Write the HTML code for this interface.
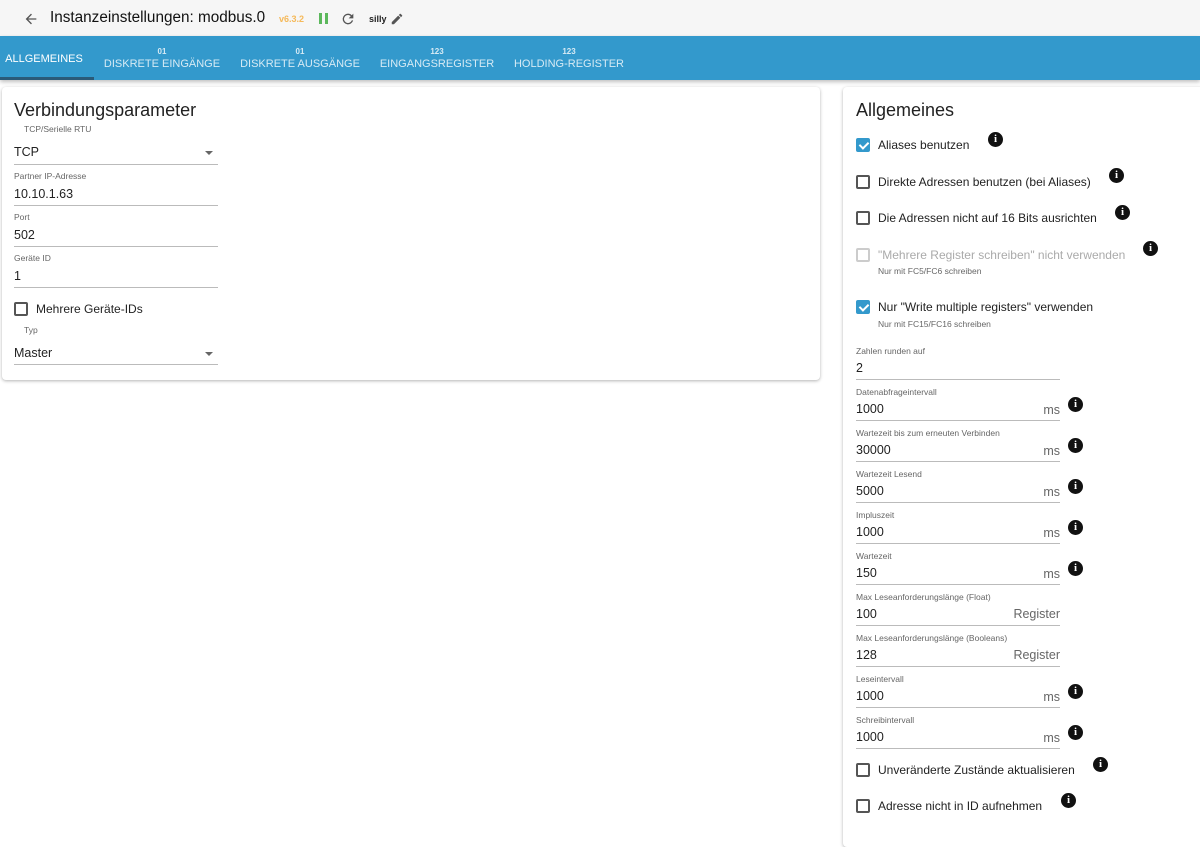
<!DOCTYPE html>
<html><head><meta charset="utf-8"><style>
*{box-sizing:border-box;margin:0;padding:0}
body{width:1200px;height:825px;overflow:hidden;background:#fff;font-family:"Liberation Sans",Arial,sans-serif;color:#222;position:relative}
.a{position:absolute;white-space:nowrap}
.hdr{position:absolute;left:0;top:0;width:1200px;height:36px;background:#f6f6f6}
.tabs{position:absolute;left:0;top:36px;width:1200px;height:44px;background:#3399cc;box-shadow:0 2px 4px rgba(0,0,0,.25)}
.tab{position:absolute;color:#fff;font-size:11px;text-align:center;opacity:.8}
.tab small{display:block;font-size:8px;font-weight:bold;margin-bottom:2px}
.card{position:absolute;background:#fff;border-radius:4px;box-shadow:0 1px 3px rgba(0,0,0,.3)}
.lbl{position:absolute;font-size:8.5px;color:#666;white-space:nowrap}
.val{position:absolute;font-size:12.5px;color:#222;white-space:nowrap}
.ln{position:absolute;height:1px;background:#bbb}
.unit{position:absolute;font-size:12.5px;color:#666;text-align:right}
.cb{position:absolute;width:14px;height:14px;border:2px solid #555;border-radius:2px}
.cb.on{background:#3399cc;border-color:#3399cc}
.cb.dis{border-color:#ccc}
.cb.on:after{content:"";position:absolute;left:3px;top:0px;width:4px;height:7px;border:solid #fff;border-width:0 2px 2px 0;transform:rotate(45deg)}
.cl{position:absolute;font-size:12px;color:#222;white-space:nowrap}
.i{position:absolute;width:15px;height:15px;border-radius:50%;background:#111;color:#fff;font-size:11px;font-weight:bold;text-align:center;line-height:15px;font-family:"Liberation Serif",serif}
.arr{position:absolute;width:0;height:0;border-left:4px solid transparent;border-right:4px solid transparent;border-top:4px solid #666}
</style></head><body>
<div class="hdr"></div>
<svg class="a" style="left:23px;top:11px" width="16" height="16" viewBox="0 0 24 24"><path d="M20 11H7.8l5.6-5.6L12 4l-8 8 8 8 1.4-1.4L7.8 13H20z" fill="#555"/></svg>
<div class="a" style="left:50px;top:9px;font-size:15.3px;color:#111">Instanzeinstellungen: modbus.0</div>
<div class="a" style="left:279px;top:14px;font-size:9px;font-weight:bold;color:#f5b95a">v6.3.2</div>
<div class="a" style="left:319px;top:13px;width:3px;height:11px;background:#5cb85c"></div>
<div class="a" style="left:325px;top:13px;width:3px;height:11px;background:#5cb85c"></div>
<svg class="a" style="left:340px;top:11px" width="16" height="16" viewBox="0 0 24 24"><path d="M17.65 6.35A7.96 7.96 0 0 0 12 4a8 8 0 1 0 7.73 10h-2.08A6 6 0 1 1 12 6c1.66 0 3.14.69 4.22 1.78L13 11h7V4z" fill="#555"/></svg>
<div class="a" style="left:369px;top:14px;font-size:9px;font-weight:bold;color:#222">silly</div>
<svg class="a" style="left:390px;top:12px" width="14" height="14" viewBox="0 0 24 24"><path d="M3 17.25V21h3.75L17.8 9.94l-3.75-3.75zM20.7 7.04a1 1 0 0 0 0-1.41l-2.34-2.34a1 1 0 0 0-1.41 0l-1.83 1.83 3.75 3.75z" fill="#555"/></svg>

<div class="tabs">
<div class="tab" style="left:0;width:88px;top:17px;opacity:1">ALLGEMEINES</div>
<div class="a" style="left:0;top:41px;width:94px;height:3px;background:#2a5a78"></div>
<div class="tab" style="left:100px;width:124px;top:11px"><small>01</small>DISKRETE EINGÄNGE</div>
<div class="tab" style="left:236px;width:128px;top:11px"><small>01</small>DISKRETE AUSGÄNGE</div>
<div class="tab" style="left:376px;width:122px;top:11px"><small>123</small>EINGANGSREGISTER</div>
<div class="tab" style="left:510px;width:118px;top:11px"><small>123</small>HOLDING-REGISTER</div>
</div>

<div class="card" style="left:2px;top:87px;width:818px;height:293px"></div>
<div class="a" style="left:14px;top:100px;font-size:18px;color:#222">Verbindungsparameter</div>
<div class="lbl" style="left:24px;top:124px">TCP/Serielle RTU</div>
<div class="val" style="left:14px;top:145px">TCP</div><div class="arr" style="left:205px;top:151px"></div>
<div class="ln" style="left:14px;top:164px;width:204px"></div>
<div class="lbl" style="left:14px;top:171px">Partner IP-Adresse</div>
<div class="val" style="left:14px;top:187px">10.10.1.63</div>
<div class="ln" style="left:14px;top:205px;width:204px"></div>
<div class="lbl" style="left:14px;top:212px">Port</div>
<div class="val" style="left:14px;top:228px">502</div>
<div class="ln" style="left:14px;top:246px;width:204px"></div>
<div class="lbl" style="left:14px;top:253px">Geräte ID</div>
<div class="val" style="left:14px;top:269px">1</div>
<div class="ln" style="left:14px;top:287px;width:204px"></div>
<div class="cb" style="left:14px;top:302px"></div>
<div class="cl" style="left:36px;top:302px">Mehrere Geräte-IDs</div>
<div class="lbl" style="left:24px;top:325px">Typ</div>
<div class="val" style="left:14px;top:346px">Master</div><div class="arr" style="left:205px;top:352px"></div>
<div class="ln" style="left:14px;top:364px;width:204px"></div>

<div class="card" style="left:843px;top:87px;width:380px;height:760px"></div>
<div class="a" style="left:856px;top:100px;font-size:18px;color:#222">Allgemeines</div>

<div class="cb on" style="left:856px;top:138px"></div><div class="cl" style="left:878px;top:138px">Aliases benutzen</div><div class="i" style="left:988px;top:132px">i</div>
<div class="cb" style="left:856px;top:175px"></div><div class="cl" style="left:878px;top:175px">Direkte Adressen benutzen (bei Aliases)</div><div class="i" style="left:1109px;top:168px">i</div>
<div class="cb" style="left:856px;top:211px"></div><div class="cl" style="left:878px;top:211px">Die Adressen nicht auf 16 Bits ausrichten</div><div class="i" style="left:1115px;top:205px">i</div>
<div class="cb dis" style="left:856px;top:248px"></div><div class="cl" style="left:878px;top:248px;color:#aaa">"Mehrere Register schreiben" nicht verwenden</div><div class="i" style="left:1143px;top:241px">i</div>
<div class="lbl" style="left:878px;top:266px;font-size:8.5px">Nur mit FC5/FC6 schreiben</div>
<div class="cb on" style="left:856px;top:300px"></div><div class="cl" style="left:878px;top:300px">Nur "Write multiple registers" verwenden</div>
<div class="lbl" style="left:878px;top:319px;font-size:8.5px">Nur mit FC15/FC16 schreiben</div>

<div class="lbl" style="left:856px;top:346px">Zahlen runden auf</div><div class="val" style="left:856px;top:361px">2</div><div class="ln" style="left:856px;top:379px;width:204px"></div>

<div class="lbl" style="left:856px;top:387px">Datenabfrageintervall</div><div class="val" style="left:856px;top:402px">1000</div><div class="unit" style="left:1000px;top:403px;width:60px">ms</div><div class="ln" style="left:856px;top:420px;width:204px"></div><div class="i" style="left:1068px;top:397px">i</div>
<div class="lbl" style="left:856px;top:428px">Wartezeit bis zum erneuten Verbinden</div><div class="val" style="left:856px;top:443px">30000</div><div class="unit" style="left:1000px;top:444px;width:60px">ms</div><div class="ln" style="left:856px;top:461px;width:204px"></div><div class="i" style="left:1068px;top:438px">i</div>
<div class="lbl" style="left:856px;top:469px">Wartezeit Lesend</div><div class="val" style="left:856px;top:484px">5000</div><div class="unit" style="left:1000px;top:485px;width:60px">ms</div><div class="ln" style="left:856px;top:502px;width:204px"></div><div class="i" style="left:1068px;top:479px">i</div>
<div class="lbl" style="left:856px;top:510px">Impluszeit</div><div class="val" style="left:856px;top:525px">1000</div><div class="unit" style="left:1000px;top:526px;width:60px">ms</div><div class="ln" style="left:856px;top:543px;width:204px"></div><div class="i" style="left:1068px;top:520px">i</div>
<div class="lbl" style="left:856px;top:551px">Wartezeit</div><div class="val" style="left:856px;top:566px">150</div><div class="unit" style="left:1000px;top:567px;width:60px">ms</div><div class="ln" style="left:856px;top:584px;width:204px"></div><div class="i" style="left:1068px;top:561px">i</div>
<div class="lbl" style="left:856px;top:592px">Max Leseanforderungslänge (Float)</div><div class="val" style="left:856px;top:607px">100</div><div class="unit" style="left:980px;top:607px;width:80px">Register</div><div class="ln" style="left:856px;top:625px;width:204px"></div>
<div class="lbl" style="left:856px;top:633px">Max Leseanforderungslänge (Booleans)</div><div class="val" style="left:856px;top:648px">128</div><div class="unit" style="left:980px;top:648px;width:80px">Register</div><div class="ln" style="left:856px;top:666px;width:204px"></div>
<div class="lbl" style="left:856px;top:674px">Leseintervall</div><div class="val" style="left:856px;top:689px">1000</div><div class="unit" style="left:1000px;top:690px;width:60px">ms</div><div class="ln" style="left:856px;top:707px;width:204px"></div><div class="i" style="left:1068px;top:684px">i</div>
<div class="lbl" style="left:856px;top:715px">Schreibintervall</div><div class="val" style="left:856px;top:730px">1000</div><div class="unit" style="left:1000px;top:731px;width:60px">ms</div><div class="ln" style="left:856px;top:748px;width:204px"></div><div class="i" style="left:1068px;top:725px">i</div>

<div class="cb" style="left:856px;top:763px"></div><div class="cl" style="left:878px;top:763px">Unveränderte Zustände aktualisieren</div><div class="i" style="left:1093px;top:757px">i</div>
<div class="cb" style="left:856px;top:799px"></div><div class="cl" style="left:878px;top:799px">Adresse nicht in ID aufnehmen</div><div class="i" style="left:1061px;top:793px">i</div>
</body></html>
